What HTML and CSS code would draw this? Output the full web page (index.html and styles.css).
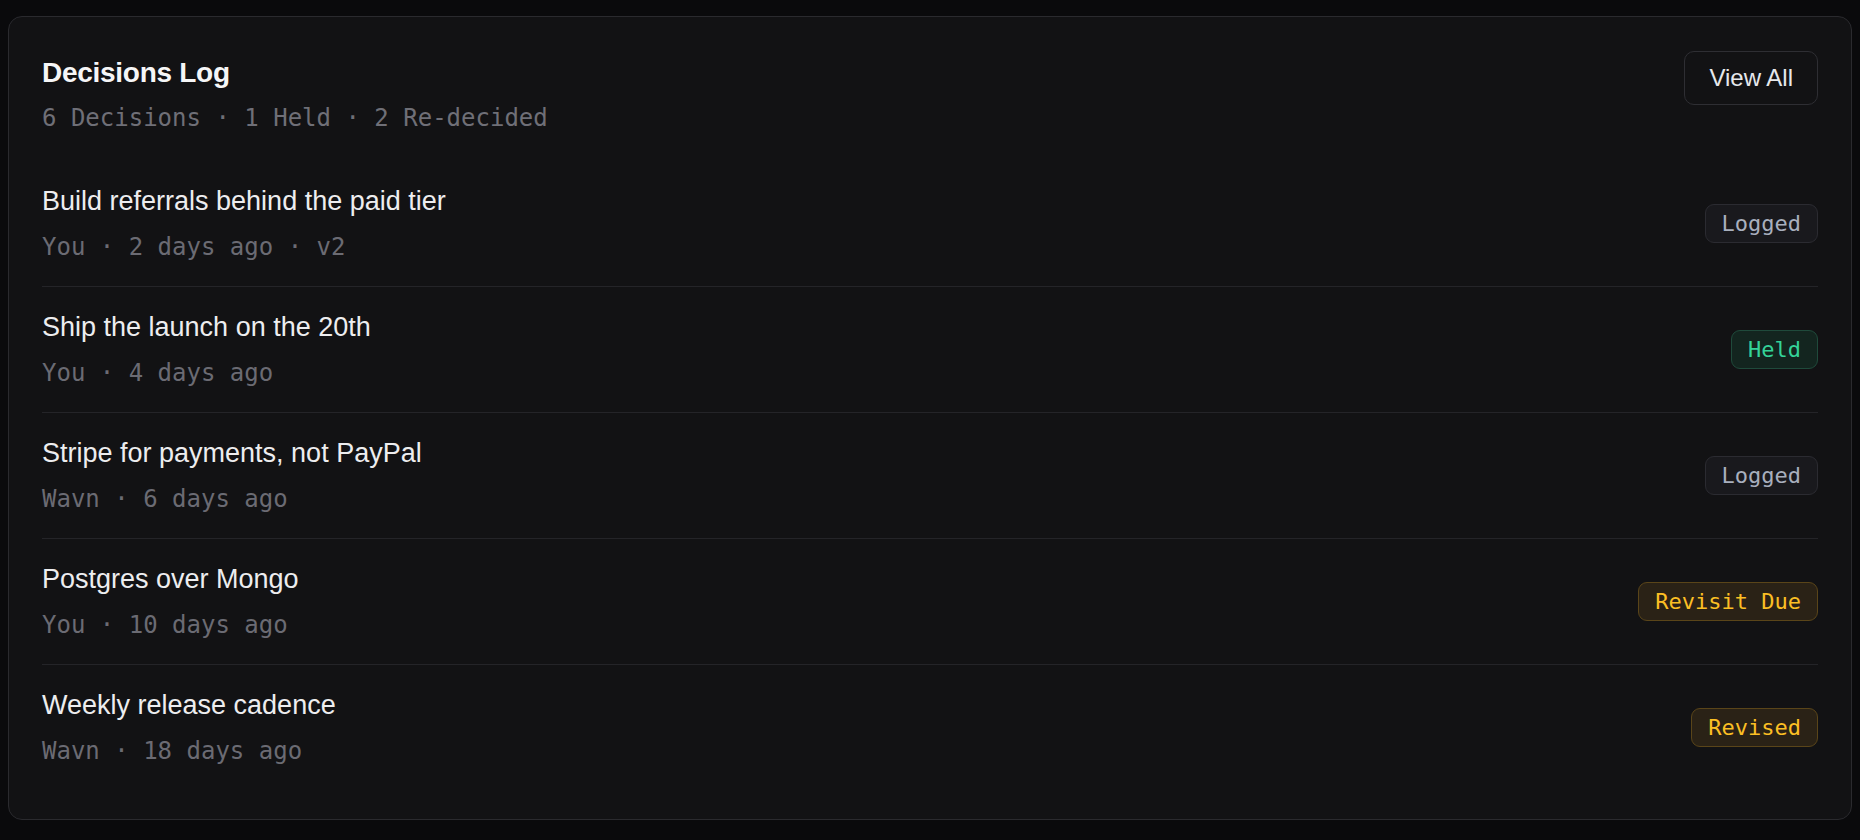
FILE: index.html
```html
<!DOCTYPE html>
<html lang="en">
<head>
<meta charset="utf-8">
<title>Decisions Log</title>
<link rel="stylesheet" href="styles.css">
</head>
<body>
  <section class="card">
    <header class="card-header">
      <div class="header-text">
        <h1 class="card-title">Decisions Log</h1>
        <p class="card-sub">6 Decisions · 1 Held · 2 Re-decided</p>
      </div>
      <button class="btn-view">View All</button>
    </header>
    <ul class="decision-list">
      <li class="decision">
        <div class="decision-body">
          <div class="decision-title">Build referrals behind the paid tier</div>
          <div class="decision-meta">You · 2 days ago · v2</div>
        </div>
        <span class="badge badge-logged">Logged</span>
      </li>
      <li class="decision">
        <div class="decision-body">
          <div class="decision-title">Ship the launch on the 20th</div>
          <div class="decision-meta">You · 4 days ago</div>
        </div>
        <span class="badge badge-held">Held</span>
      </li>
      <li class="decision">
        <div class="decision-body">
          <div class="decision-title">Stripe for payments, not PayPal</div>
          <div class="decision-meta">Wavn · 6 days ago</div>
        </div>
        <span class="badge badge-logged">Logged</span>
      </li>
      <li class="decision">
        <div class="decision-body">
          <div class="decision-title">Postgres over Mongo</div>
          <div class="decision-meta">You · 10 days ago</div>
        </div>
        <span class="badge badge-amber">Revisit Due</span>
      </li>
      <li class="decision">
        <div class="decision-body">
          <div class="decision-title">Weekly release cadence</div>
          <div class="decision-meta">Wavn · 18 days ago</div>
        </div>
        <span class="badge badge-amber">Revised</span>
      </li>
    </ul>
  </section>
</body>
</html>
```

FILE: styles.css
```css
* { box-sizing: border-box; }

html, body {
  margin: 0;
  background: #0a0a0c;
}

body {
  padding: 16px 8px 0 8px;
  font-family: "Liberation Sans", Arial, sans-serif;
  color: #ececee;
}

.card {
  background: #121214;
  border: 1px solid #2a2a2e;
  border-radius: 14px;
  padding: 34px 33px 29px 33px;
}

.card-header {
  display: flex;
  justify-content: space-between;
  align-items: flex-start;
  margin-bottom: 29px;
}

.header-text {
  padding-top: 6px;
}

.card-title {
  margin: 0;
  font-size: 28px;
  font-weight: 700;
  letter-spacing: -0.01em;
  line-height: normal;
  color: #f6f6f7;
}

.card-sub {
  margin: 15px 0 0 0;
  font-family: "DejaVu Sans Mono", monospace;
  font-size: 24px;
  line-height: normal;
  color: #6f6f77;
}

.btn-view {
  font-family: "Liberation Sans", Arial, sans-serif;
  font-size: 24px;
  line-height: normal;
  color: #e6e8ec;
  background: transparent;
  border: 1px solid #2e2e33;
  border-radius: 10px;
  padding: 12px 24px;
  cursor: pointer;
}

.decision-list {
  list-style: none;
  margin: 0;
  padding: 0;
}

.decision {
  display: flex;
  justify-content: space-between;
  align-items: center;
  padding: 25px 0 25px 0;
  border-bottom: 1px solid #242428;
}

.decision:last-child {
  border-bottom: none;
}

.decision-body {
  display: flex;
  flex-direction: column;
  gap: 16px;
}

.decision-title {
  font-size: 27px;
  line-height: normal;
  color: #ededef;
}

.decision-meta {
  font-family: "DejaVu Sans Mono", monospace;
  font-size: 24px;
  line-height: normal;
  color: #6b6b73;
}

.badge {
  font-family: "DejaVu Sans Mono", monospace;
  font-size: 22px;
  line-height: 25px;
  padding: 6px 16px;
  border-radius: 9px;
  border: 1px solid;
}

.badge-logged {
  color: #a8afbd;
  background: #19191d;
  border-color: #2b2b31;
}

.badge-held {
  color: #34d399;
  background: #13251f;
  border-color: #1f4a3b;
}

.badge-amber {
  color: #fbbf24;
  background: #2a2216;
  border-color: #5a4519;
}
```
